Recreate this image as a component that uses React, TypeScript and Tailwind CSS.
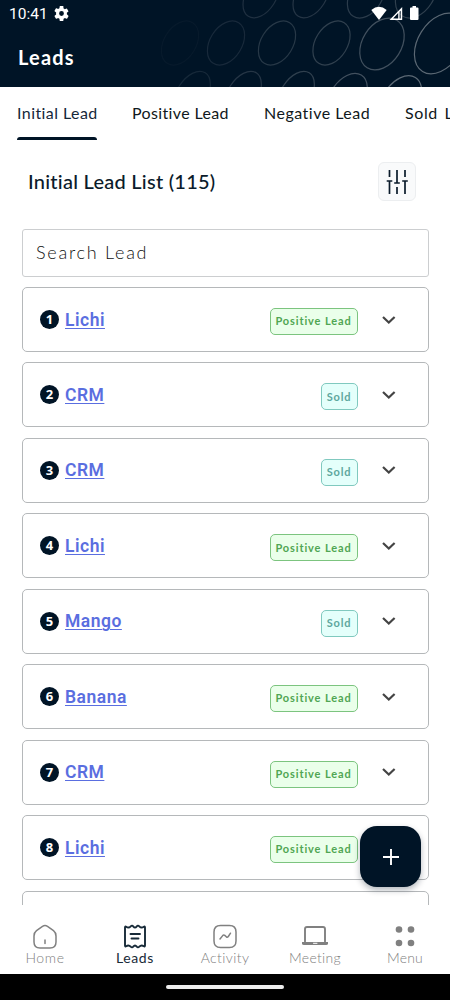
import React from "react";

type Lead = { name: string; status: "Positive Lead" | "Sold" };

const leads: Lead[] = [
  { name: "Lichi", status: "Positive Lead" },
  { name: "CRM", status: "Sold" },
  { name: "CRM", status: "Sold" },
  { name: "Lichi", status: "Positive Lead" },
  { name: "Mango", status: "Sold" },
  { name: "Banana", status: "Positive Lead" },
  { name: "CRM", status: "Positive Lead" },
  { name: "Lichi", status: "Positive Lead" },
];

// [cx, cy, rx, ry, opacity]
const rings: number[][] = [
  [180, 43, 16, 24, 0.03],
  [226, 43, 16, 24, 0.11],
  [277, 43, 16, 24, 0.18],
  [331.5, 43, 16, 24, 0.22],
  [382, 44, 19.5, 28, 0.3],
  [440, 43.5, 22, 33, 0.42],
  [261, -4, 15, 24, 0.14],
  [311, -4, 15, 24, 0.17],
  [366, -4, 16, 24, 0.2],
  [416, -6, 18, 26, 0.22],
  [192, 94, 15, 25, 0.1],
  [243, 94, 15, 25, 0.17],
  [296, 94, 15, 25, 0.22],
  [347, 98, 17, 27, 0.3],
  [400, 102, 18, 29, 0.42],
];

function Header() {
  return (
    <header className="relative h-[87px] shrink-0 overflow-hidden bg-[#001426] text-white">
      <svg className="absolute inset-0" width="450" height="87" viewBox="0 0 450 87" fill="none" stroke="#d9dde0">
        {rings.map(([cx, cy, rx, ry, o]) => (
          <ellipse key={`${cx}-${cy}`} cx={cx} cy={cy} rx={rx} ry={ry} strokeOpacity={o} strokeWidth="1.2" transform={`rotate(32 ${cx} ${cy})`} />
        ))}
      </svg>
      <div className="relative flex h-7 items-center pl-[9px] pr-[30px] font-['Roboto',sans-serif]">
        <span className="w-[45px] pt-px text-[15.5px]">10:41</span>
        <svg width="15" height="15" viewBox="2 2 20 20" fill="white" className="relative -top-px">
          <path d="M19.14 12.94c.04-.3.06-.61.06-.94s-.02-.64-.07-.94l2.03-1.58a.49.49 0 0 0 .12-.61l-1.92-3.32a.49.49 0 0 0-.59-.22l-2.39.96a7 7 0 0 0-1.62-.94l-.36-2.54A.48.48 0 0 0 13.92 2h-3.84a.48.48 0 0 0-.47.41l-.36 2.54a7 7 0 0 0-1.62.94l-2.39-.96a.48.48 0 0 0-.59.22L2.74 8.47a.48.48 0 0 0 .12.61l2.03 1.58a7 7 0 0 0 0 2.68l-2.03 1.58a.49.49 0 0 0-.12.61l1.92 3.32c.12.22.37.29.59.22l2.39-.96c.5.38 1.03.7 1.62.94l.36 2.54c.05.24.24.41.48.41h3.84c.24 0 .44-.17.47-.41l.36-2.54a7 7 0 0 0 1.62-.94l2.39.96c.22.08.47 0 .59-.22l1.92-3.32a.49.49 0 0 0-.12-.61zM12 15.2A3.2 3.2 0 1 1 12 8.8a3.2 3.2 0 0 1 0 6.4z" />
        </svg>
        <svg width="49" height="16" viewBox="0 0 49 16" className="relative ml-auto" fill="white">
          <path d="M0.3 4 Q8 -2.5 15.7 4 L8 14Z" />
          <path d="M18.5 14 L31.2 1 V14Z M22 12.5 H27.2 V7Z M28.6 5.8 V12.5 H29.7 V4.700Z" fillRule="evenodd" />
          <path d="M40 1.5h1.5V0h3.5v1.500H46.500q1 0 1 1V13q0 1-1 1h-6.500q-1 0-1-1V2.500q0-1 1-1z" />
        </svg>
      </div>
      <h1 className="relative pl-[18px] pt-[15px] text-[20px] font-bold leading-7 tracking-[1.2px]">Leads</h1>
    </header>
  );
}

function Tabs() {
  return (
    <nav className="flex h-[53px] shrink-0 gap-[35px] overflow-hidden whitespace-nowrap pl-[17px] text-base leading-[23px] text-[#101820]">
      <div className="flex w-20 shrink-0 flex-col justify-between text-[#15273a]">
        <span className="pt-3.5 tracking-[0.43px]">Initial Lead</span>
        <span className="h-[3px] rounded-t bg-[#001426]" />
      </div>
      <span className="w-[97px] shrink-0 pt-3.5 tracking-[0.36px]">Positive Lead</span>
      <span className="w-[106px] shrink-0 pt-3.5 tracking-[0.5px]">Negative Lead</span>
      <span className="shrink-0 pt-3.5 tracking-[0.6px] [word-spacing:2px]">Sold Lead</span>
    </nav>
  );
}

function FilterIcon() {
  return (
    <svg width="22" height="26" viewBox="0 0 22 26" fill="none" stroke="#0b1b2b" strokeWidth="1.7">
      <path d="M3.5 1v7M3.5 12v13M.7 12h5.600M11 1v13M8.200 14h5.600M11 18v7M19 1v7M19 12v13M16.200 12h5.600" />
    </svg>
  );
}

function LeadCard({ lead, index }: { lead: Lead; index: number }) {
  const sold = lead.status === "Sold";
  return (
    <article className="flex h-[65px] shrink-0 items-center rounded-[5px] border border-[#b5b8ba] pl-[17px] pr-8">
      <span className="flex size-[19px] items-center justify-center rounded-full bg-[#001426] font-['Open_Sans',sans-serif] text-[13px] font-bold leading-none text-white">{index}</span>
      <a className="ml-[6px] font-['Roboto',sans-serif] text-[17.5px] font-semibold leading-6 tracking-[0.5px] text-[#5a6ee0] underline decoration-1 underline-offset-2">{lead.name}</a>
      <span
        className={
          sold
            ? "relative top-[2px] ml-auto flex h-[27px] w-[37px] items-center justify-center rounded-[5px] border border-[#80c9bf] bg-[#e4fffb] text-[11px] font-bold tracking-[0.85px] text-[#5ea79e]"
            : "relative top-[2px] ml-auto flex h-[27px] w-[88px] items-center justify-center whitespace-nowrap rounded-[5px] border border-[#7cc47f] bg-[#eaffea] text-[11px] font-bold tracking-[0.88px] text-[#50a653]"
        }
      >
        {lead.status}
      </span>
      <svg className="ml-6" width="14" height="8" viewBox="0 0 14 8" fill="none" stroke="#444" strokeWidth="2.2">
        <path d="M1 1l5.800 5.500L12.600 1" />
      </svg>
    </article>
  );
}

const navItems = [
  {
    label: "Home",
    tracking: "tracking-[0.6px]",
    icon: <path d="M10.5 3.3q2.5-1.6 5 0l6 4.3Q24 9.500 24 13v6q0 6-6 6H8q-6 0-6-6v-6q0-3.500 2.500-5.400zM13 17v3.500" />,
  },
  {
    label: "Leads",
    tracking: "tracking-[0.6px]",
    icon: <path strokeWidth="1.9" d="M3 4.5v18q0 1.5 1.2.7c2-1.5 3-1.2 4.5.5 1 1 1.8.8 2.5 0 1.3-1.6 2.3-1.6 3.6 0 .7.8 1.5 1 2.5 0 1.5-1.7 2.5-2 4.5-.5q1.200.8 1.200-.7v-18q0-1.500-1.200-.7c-2 1.500-3 1.200-4.500-.5-1-1-1.800-.8-2.500 0-1.300 1.600-2.300 1.600-3.600 0-.7-.8-1.500-1-2.500 0-1.500 1.700-2.500 2-4.500.5Q3 3 3 4.500zM8.500 11h9.500M9.500 15.500h7" />,
  },
  {
    label: "Activity",
    tracking: "tracking-[0.4px]",
    icon: <path d="M8.5 2.5h9q6.5 0 6.5 6.5v9q0 6.5-6.5 6.5h-9Q2 24.5 2 18V9q0-6.5 6.5-6.5zM8 16l2.7-3.4q1-1.1 2.1-.2l1.5 1.4q1.1.8 2-.3l2.2-3.3" />,
  },
  {
    label: "Meeting",
    tracking: "tracking-[0.3px]",
    icon: (
      <>
        <path d="M3 18.500V6q0-2 2-2h16q2 0 2 2v12.500" strokeWidth="1.900" />
        <path d="M0 19h26v1.5q0 1.5-2 1.5H2q-2 0-2-1.5z" fill="currentColor" stroke="none" />
        <path d="M11.500 20.300h3.500" stroke="white" strokeWidth="1" />
      </>
    ),
  },
  {
    label: "Menu",
    tracking: "tracking-[0.2px]",
    icon: (
      <g fill="currentColor" stroke="none">
        <circle cx="7" cy="6.5" r="3.3" />
        <circle cx="19" cy="6.5" r="3.3" />
        <circle cx="7" cy="20" r="3.3" />
        <circle cx="19" cy="20" r="3.3" />
      </g>
    ),
  },
];

export default function App() {
  return (
    <main className="relative flex h-[1000px] w-[450px] flex-col overflow-hidden bg-white font-['Lato',sans-serif]">
      <Header />
      <Tabs />
      <div className="flex h-[88.5px] shrink-0 items-start justify-between pl-7 pr-[34px] pt-[22px]">
        <h2 className="pt-[6px] text-[20px] font-medium leading-[26px] tracking-[0.25px] text-[#0b1b2b]">Initial Lead List (115)</h2>
        <button className="flex h-[39px] w-[38px] items-center justify-center rounded-md border border-[#eceef0] bg-[#f9fafb]">
          <FilterIcon />
        </button>
      </div>
      <section className="flex h-[676.5px] shrink-0 flex-col overflow-hidden pl-[22px] pr-[21.5px]">
        <div className="mb-[10.5px] flex h-12 shrink-0 items-center rounded-[3px] border border-[#ccced0] pl-[13px] text-[18px] font-light tracking-[1.75px] text-[#111]">Search Lead</div>
        <div className="flex flex-col gap-[10.45px]">
          {leads.map((lead, i) => (
            <LeadCard key={i} lead={lead} index={i + 1} />
          ))}
          <div className="h-[65px] shrink-0 rounded-[5px] border border-[#b5b8ba]" />
        </div>
      </section>
      <nav className="grid h-[69px] shrink-0 grid-cols-5 pt-[18px]">
        {navItems.map(({ label, tracking, icon }) => (
          <div key={label} className={label === "Leads" ? "flex flex-col items-center text-[#172a38]" : "flex flex-col items-center text-[#808080]"}>
            <svg width="26" height="26" viewBox="0 0 26 26" fill="none" stroke="currentColor" strokeWidth="1.5" strokeLinecap="round" strokeLinejoin="round">
              {icon}
            </svg>
            <span className={`text-[14px] leading-[18px] ${label === "Leads" ? "font-normal" : "font-light"} ${tracking}`}>{label}</span>
          </div>
        ))}
      </nav>
      <footer className="flex h-[26px] shrink-0 items-center justify-center bg-black">
        <span className="h-[4px] w-[118px] rounded-full bg-[#ececec]" />
      </footer>
      <button className="absolute left-[360px] top-[826px] flex size-[61px] items-center justify-center rounded-[17px] bg-[#001426] shadow-[0_3px_6px_rgba(0,20,38,0.3)]">
        <svg width="16" height="16" viewBox="0 0 16 16" stroke="white" strokeWidth="1.9">
          <path d="M8 0v16M0 8h16" />
        </svg>
      </button>
    </main>
  );
}
